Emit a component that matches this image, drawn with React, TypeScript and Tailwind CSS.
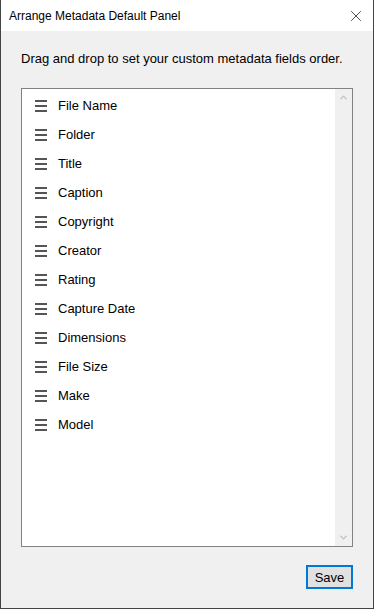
import { X, ChevronUp, ChevronDown } from 'lucide-react';

const fields = [
	'File Name',
	'Folder',
	'Title',
	'Caption',
	'Copyright',
	'Creator',
	'Rating',
	'Capture Date',
	'Dimensions',
	'File Size',
	'Make',
	'Model',
];

function DragHandle() {
	return (
		<div className="flex flex-col gap-[3px] w-[12px]">
			<span className="h-[2px] bg-[#555]" />
			<span className="h-[2px] bg-[#555]" />
			<span className="h-[2px] bg-[#555]" />
		</div>
	);
}

export default function App() {
	return (
		<div
			className="w-[374px] h-[609px] flex flex-col bg-[#f0f0f0] border border-t-0 border-[#444] text-[#000]"
			style={{ fontFamily: '"Liberation Sans", Arial, sans-serif' }}
		>
			{/* title bar */}
			<div className="h-[31px] bg-white flex items-center justify-between pl-[8px] pr-[8px]">
				<span className="text-[12px]">Arrange Metadata Default Panel</span>
				<X className="size-[18px] text-[#111]" strokeWidth={1} />
			</div>

			<div className="flex-1 flex flex-col px-[20px]">
				<p className="text-[13px] mt-[20px] leading-[16px]">
					Drag and drop to set your custom metadata fields order.
				</p>

				{/* list */}
				<div className="mt-[21px] h-[459px] bg-white border border-[#828282] flex">
					<ul className="flex-1 flex flex-col pt-[2px]">
						{fields.map((f) => (
							<li key={f} className="h-[29px] flex items-center gap-[11px] pl-[13px]">
								<DragHandle />
								<span className="text-[13px]">{f}</span>
							</li>
						))}
					</ul>
					<div className="w-[17px] bg-[#f0f0f0] flex flex-col justify-between items-center py-[3px]">
						<ChevronUp className="size-[11px] text-[#c2c2c2]" strokeWidth={3} />
						<ChevronDown className="size-[11px] text-[#c2c2c2]" strokeWidth={3} />
					</div>
				</div>

				<div className="flex justify-end mt-[18px]">
					<button className="w-[47px] h-[24px] bg-[#e1e1e1] border-2 border-[#0078d7] text-[13px] leading-none">
						Save
					</button>
				</div>
			</div>
		</div>
	);
}
